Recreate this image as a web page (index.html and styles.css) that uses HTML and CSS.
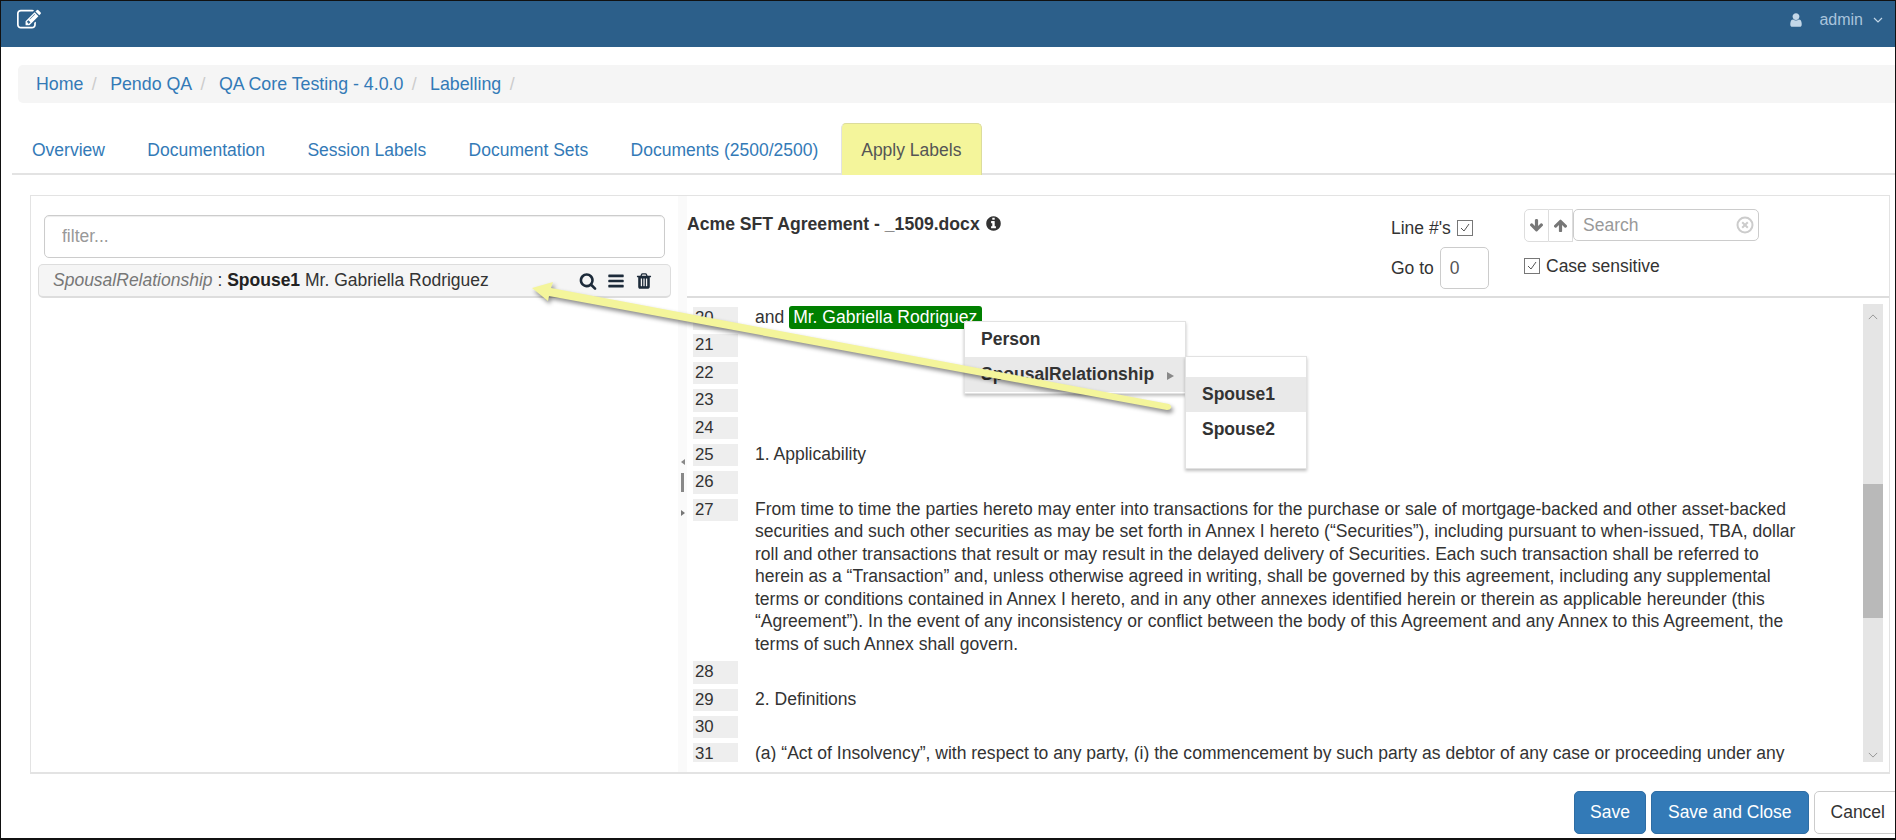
FILE: index.html
```html
<!DOCTYPE html>
<html lang="en">
<head>
    <meta charset="UTF-8">
    <title>Apply Labels</title>
    <link rel="stylesheet" href="styles.css">
</head>
<body>
<div class="page">
  <div class="topbar">
    <svg class="edit-icon" viewBox="0 0 1792 1792"><path d="M888 1184l116-116-152-152-116 116v56h96v96h56zm440-720q-16-16-33 1l-350 350q-17 17-1 33t33-1l350-350q17-17 1-33zm80 594v190q0 119-84.5 203.5t-203.5 84.5h-832q-119 0-203.5-84.5t-84.5-203.5v-832q0-119 84.5-203.5t203.5-84.5h832q63 0 117 25 15 7 18 23 3 17-9 29l-49 49q-14 14-32 8-23-6-45-6h-832q-66 0-113 47t-47 113v832q0 66 47 113t113 47h832q66 0 113-47t47-113v-126q0-13 9-22l64-64q15-15 35-7t20 29zm-96-738l288 288-672 672h-288v-288zm444 132l-92 92-288-288 92-92q28-28 68-28t68 28l152 152q28 28 28 68t-28 68z"/></svg>
    <div class="user">
      <svg class="user-icon" viewBox="0 0 1792 1792"><path d="M1536 1399q0 109-62.5 187t-150.5 78h-854q-88 0-150.5-78t-62.5-187q0-85 8.5-160.5t31.5-152 58.5-131 94-89 134.5-34.5q131 128 313 128t313-128q76 0 134.5 34.5t94 89 58.5 131 31.5 152 8.5 160.5zm-256-887q0 159-112.5 271.5t-271.5 112.5-271.5-112.5-112.5-271.5 112.5-271.5 271.5-112.5 271.5 112.5 112.5 271.5z"/></svg>
      <span class="user-name">admin</span>
      <svg class="user-caret" viewBox="0 0 10 6"><path d="M1 1l4 4 4-4"/></svg>
    </div>
  </div>

  <div class="breadcrumb">
    <a href="#">Home</a><span class="sep">/</span>
    <a href="#">Pendo QA</a><span class="sep">/</span>
    <a href="#">QA Core Testing - 4.0.0</a><span class="sep">/</span>
    <a href="#">Labelling</a><span class="sep">/</span>
  </div>

  <div class="tabs">
    <a href="#">Overview</a>
    <a href="#">Documentation</a>
    <a href="#">Session Labels</a>
    <a href="#">Document Sets</a>
    <a href="#">Documents (2500/2500)</a>
    <a href="#" class="active">Apply Labels</a>
  </div>

  <div class="panel">
    <div class="left-pane">
      <input class="filter" type="text" placeholder="filter...">
      <div class="label-row">
        <span class="label-text"><i>SpousalRelationship</i> : <b>Spouse1</b> Mr. Gabriella Rodriguez</span>
        <span class="label-icons">
          <svg viewBox="0 0 1792 1792"><path d="M1216 832q0-185-131.5-316.5t-316.5-131.5-316.5 131.5-131.5 316.5 131.5 316.5 316.5 131.5 316.5-131.5 131.5-316.5zm512 832q0 52-38 90t-90 38q-54 0-90-38l-343-342q-179 124-399 124-143 0-273.5-55.5t-225-150-150-225-55.5-273.5 55.5-273.5 150-225 225-150 273.5-55.5 273.5 55.5 225 150 150 225 55.5 273.5q0 220-124 399l343 343q37 37 37 90z"/></svg>
          <svg viewBox="0 0 1792 1792"><path d="M1664 1344v128q0 26-19 45t-45 19h-1408q-26 0-45-19t-19-45v-128q0-26 19-45t45-19h1408q26 0 45 19t19 45zm0-512v128q0 26-19 45t-45 19h-1408q-26 0-45-19t-19-45v-128q0-26 19-45t45-19h1408q26 0 45 19t19 45zm0-512v128q0 26-19 45t-45 19h-1408q-26 0-45-19t-19-45v-128q0-26 19-45t45-19h1408q26 0 45 19t19 45z"/></svg>
          <svg viewBox="0 0 1792 1792"><path d="M704 1376v-704q0-14-9-23t-23-9h-64q-14 0-23 9t-9 23v704q0 14 9 23t23 9h64q14 0 23-9t9-23zm256 0v-704q0-14-9-23t-23-9h-64q-14 0-23 9t-9 23v704q0 14 9 23t23 9h64q14 0 23-9t9-23zm256 0v-704q0-14-9-23t-23-9h-64q-14 0-23 9t-9 23v704q0 14 9 23t23 9h64q14 0 23-9t9-23zm-544-992h448l-48-117q-7-9-17-11h-317q-10 2-17 11zm928 32v64q0 14-9 23t-23 9h-96v948q0 83-47 143.5t-113 60.5h-832q-66 0-113-58.5t-47-141.5v-952h-96q-14 0-23-9t-9-23v-64q0-14 9-23t23-9h309l70-167q15-37 54-63t79-26h320q40 0 79 26t54 63l70 167h309q14 0 23 9t9 23z"/></svg>
        </span>
      </div>
    </div>

    <div class="splitter">
      <span class="split-left"></span>
      <span class="split-bar"></span>
      <span class="split-right"></span>
    </div>

    <div class="right-pane">
      <div class="doc-header">
        <div class="doc-title">Acme SFT Agreement - _1509.docx
          <svg class="info-icon" viewBox="0 0 1792 1792"><path d="M1152 1376v-160q0-14-9-23t-23-9h-96v-512q0-14-9-23t-23-9h-320q-14 0-23 9t-9 23v160q0 14 9 23t23 9h96v320h-96q-14 0-23 9t-9 23v160q0 14 9 23t23 9h448q14 0 23-9t9-23zm-128-896v-160q0-14-9-23t-23-9h-192q-14 0-23 9t-9 23v160q0 14 9 23t23 9h192q14 0 23-9t9-23zm640 416q0 209-103 385.5t-279.5 279.5-385.5 103-385.5-103-279.5-279.5-103-385.5 103-385.5 279.5-279.5 385.5-103 385.5 103 279.5 279.5 103 385.5z"/></svg>
        </div>
        <div class="line-tools">
          <div class="tool-row">Line #'s <span class="check"><svg viewBox="0 0 14 14"><path d="M3 7l3 3 5-7"/></svg></span></div>
          <div class="tool-row goto">Go to <input class="goto-input" type="text" value="0"></div>
        </div>
        <div class="search-tools">
          <div class="search-row">
            <span class="arrow-btn first"><svg viewBox="0 0 1792 1792"><path d="M1675 832q0 53-37 90l-651 651q-39 37-91 37-53 0-90-37l-651-651q-38-36-38-90 0-53 38-91l74-75q39-37 91-37 53 0 90 37l294 294v-704q0-52 38-90t90-38h128q52 0 90 38t38 90v704l294-294q37-37 90-37 52 0 91 37l75 75q37 39 37 91z"/></svg></span>
            <span class="arrow-btn"><svg viewBox="0 0 1792 1792"><path d="M1675 971q0 51-37 90l-75 75q-38 38-91 38-54 0-90-38l-294-293v704q0 52-37.5 84.5t-90.5 32.5h-128q-53 0-90.5-32.5t-37.5-84.5v-704l-294 293q-36 38-90 38t-90-38l-75-75q-38-38-38-90 0-53 38-91l651-651q35-37 90-37 54 0 91 37l651 651q37 39 37 91z"/></svg></span>
            <div class="search-box">
              <input type="text" placeholder="Search">
              <svg class="clear-icon" viewBox="0 0 18 18"><circle cx="9" cy="9" r="7.5"/><path d="M6.2 6.2l5.6 5.6M11.8 6.2l-5.6 5.6"/></svg>
            </div>
          </div>
          <div class="tool-row case"><span class="check"><svg viewBox="0 0 14 14"><path d="M3 7l3 3 5-7"/></svg></span>Case sensitive</div>
        </div>
      </div>

      <div class="doc-body">
        <div class="doc-lines">
          <div class="line"><span class="num">20</span><p>and <span class="tag">Mr. Gabriella Rodriguez</span></p></div>
          <div class="line"><span class="num">21</span><p></p></div>
          <div class="line"><span class="num">22</span><p></p></div>
          <div class="line"><span class="num">23</span><p></p></div>
          <div class="line"><span class="num">24</span><p></p></div>
          <div class="line"><span class="num">25</span><p>1. Applicability</p></div>
          <div class="line"><span class="num">26</span><p></p></div>
          <div class="line"><span class="num">27</span><p>From time to time the parties hereto may enter into transactions for the purchase or sale of mortgage-backed and other asset-backed securities and such other securities as may be set forth in Annex I hereto (“Securities”), including pursuant to when-issued, TBA, dollar roll and other transactions that result or may result in the delayed delivery of Securities. Each such transaction shall be referred to herein as a “Transaction” and, unless otherwise agreed in writing, shall be governed by this agreement, including any supplemental terms or conditions contained in Annex I hereto, and in any other annexes identified herein or therein as applicable hereunder (this “Agreement”). In the event of any inconsistency or conflict between the body of this Agreement and any Annex to this Agreement, the terms of such Annex shall govern.</p></div>
          <div class="line"><span class="num">28</span><p></p></div>
          <div class="line"><span class="num">29</span><p>2. Definitions</p></div>
          <div class="line"><span class="num">30</span><p></p></div>
          <div class="line"><span class="num">31</span><p>(a) “Act of Insolvency”, with respect to any party, (i) the commencement by such party as debtor of any case or proceeding under any</p></div>
        </div>
        <div class="scrollbar">
          <span class="scroll-btn"><svg viewBox="0 0 12 7"><path d="M1 6l5-5 5 5"/></svg></span>
          <span class="scroll-thumb"></span>
          <span class="scroll-btn"><svg viewBox="0 0 12 7"><path d="M1 1l5 5 5-5"/></svg></span>
        </div>
      </div>
    </div>
  </div>

  <div class="footer">
    <button class="btn primary">Save</button>
    <button class="btn primary">Save and Close</button>
    <button class="btn cancel">Cancel</button>
  </div>

  <!-- context menu -->
  <div class="menu menu-main">
    <div class="menu-item">Person</div>
    <div class="menu-item hover">SpousalRelationship <span class="menu-arrow"></span></div>
  </div>
  <div class="menu menu-sub">
    <div class="menu-item hover">Spouse1</div>
    <div class="menu-item">Spouse2</div>
  </div>

  <!-- callout arrow drawn over the screenshot -->
  <svg class="callout" viewBox="0 0 1896 840" width="1896" height="840">
    <path d="M532 288L553 282L551 288L1169 404Q1172 406 1171 408Q1170 410 1167 410L549 296L548 301Z"/>
  </svg>
</div>
</body>
</html>
```

FILE: styles.css
```css
* {
    box-sizing: border-box;
}

body {
    margin: 0;
    font-family: "Liberation Sans", Arial, sans-serif;
    font-size: 17.5px;
    color: #333;
}

a {
    color: #337ab7;
    text-decoration: none;
}

.page {
    position: relative;
    width: 1896px;
    height: 840px;
    overflow: hidden;
    background: #fff;
    border: 1px solid #111;
    border-bottom-width: 2px;
    display: flex;
    flex-direction: column;
}

/* Top bar */
.topbar {
    height: 46px;
    flex: none;
    background: #2c5f8a;
    display: flex;
    justify-content: space-between;
    padding: 7px 12px 0 16px;
}

.edit-icon {
    width: 24px;
    height: 24px;
    fill: #fff;
}

.user {
    display: flex;
    align-items: center;
    height: 24px;
    color: #a9c4dc;
    font-size: 16px;
}

.user-icon {
    width: 16px;
    height: 16px;
    fill: #c3d7e8;
    margin-right: 15px;
}

.user-caret {
    width: 10px;
    height: 6px;
    margin-left: 10px;
    fill: none;
    stroke: #c3d7e8;
    stroke-width: 1.2;
}

/* Breadcrumb */
.breadcrumb {
    flex: none;
    height: 38px;
    margin: 18px 0 0 17px;
    padding-left: 18px;
    line-height: 38px;
    font-size: 17.8px;
    background: #f5f5f5;
    border-radius: 5px 0 0 5px;
}

.sep {
    color: #ccc;
    margin: 0 8.4px;
}

/* Tabs */
.tabs {
    flex: none;
    height: 52px;
    margin: 20px 0 0 11px;
    display: flex;
    font-size: 17.5px;
    border-bottom: 2px solid #e3e3e3;
}

.tabs a {
    height: 52px;
    padding: 0 20px;
    margin-right: 2.4px;
    line-height: 54px;
}

.tabs a.active {
    padding: 0 19.5px;
    color: #555;
    background: #f4f59b;
    line-height: 52px;
    border: 1px solid #dcdc9c;
    border-left-color: #e2e2e2;
    border-bottom: 0;
    border-radius: 5px 5px 0 0;
}

/* Main panel */
.panel {
    flex: none;
    height: 579px;
    margin: 20px 5px 0 29px;
    display: flex;
    border: 1px solid #e3e3e3;
    border-bottom-width: 2px;
}

.left-pane {
    width: 647px;
    flex: none;
    padding-top: 19px;
}

.filter {
    display: block;
    width: 621px;
    height: 43px;
    margin-left: 13px;
    padding: 0 17px;
    border: 1px solid #ccc;
    border-radius: 5px;
    font: inherit;
    color: #555;
    box-shadow: inset 0 1px 1px rgba(0, 0, 0, .075);
}

.filter::placeholder,
.search-box input::placeholder {
    color: #999;
}

.label-row {
    width: 633px;
    height: 34px;
    margin: 6px 0 0 7px;
    padding: 0 16px 0 14px;
    display: flex;
    align-items: center;
    justify-content: space-between;
    background: #f5f5f5;
    border: 1px solid #ddd;
    border-bottom-width: 2px;
    border-radius: 5px;
}

.label-text i {
    color: #777;
}

.label-text b {
    color: #222;
}

.label-icons {
    display: flex;
    gap: 10px;
    margin-right: 1px;
}

.label-icons svg {
    width: 18px;
    height: 18px;
    fill: #1d2b3a;
}

.splitter {
    width: 9px;
    flex: none;
    background: #fafafa;
    position: relative;
    display: flex;
    flex-direction: column;
    align-items: center;
    padding-top: 263px;
}

.split-left {
    width: 0;
    height: 0;
    border: 3px solid transparent;
    border-right: 4px solid #888;
    border-left: 0;
}

.split-bar {
    width: 3px;
    height: 19px;
    margin-top: 8px;
    background: #888;
}

.split-right {
    width: 0;
    height: 0;
    margin-top: 18px;
    border: 3px solid transparent;
    border-left: 4px solid #777;
    border-right: 0;
}

.right-pane {
    flex: 1;
    min-width: 0;
    display: flex;
    flex-direction: column;
}

.doc-header {
    height: 102px;
    flex: none;
    display: flex;
    border-bottom: 2px solid #ddd;
}

.doc-title {
    flex: 1;
    padding-top: 18px;
    font-size: 17.6px;
    font-weight: bold;
}

.info-icon {
    width: 17px;
    height: 17px;
    vertical-align: -2px;
    fill: #333;
}

.line-tools {
    width: 133px;
    flex: none;
    padding-top: 22px;
}

.tool-row {
    display: flex;
    align-items: center;
    gap: 1px;
    height: 20px;
    white-space: pre;
}

.tool-row.goto {
    height: 42px;
    margin-top: 9px;
}

.check {
    width: 16px;
    height: 16px;
    flex: none;
    border: 1px solid #777;
    background: #fff;
}

.check svg {
    display: block;
    fill: none;
    stroke: #555;
    stroke-width: 1;
}

.goto-input {
    width: 49px;
    height: 42px;
    padding: 0 9px;
    border: 1px solid #ccc;
    border-radius: 5px;
    font: inherit;
    color: #555;
}

.search-tools {
    width: 365px;
    flex: none;
    padding-top: 13px;
}

.search-row {
    display: flex;
    height: 33px;
    margin-bottom: 14px;
}

.arrow-btn {
    width: 24px;
    height: 33px;
    display: flex;
    align-items: center;
    justify-content: center;
    border: 1px solid #ddd;
    border-left-width: 0;
}

.arrow-btn.first {
    width: 25px;
    border-left-width: 1px;
    border-radius: 5px 0 0 5px;
}

.arrow-btn svg {
    width: 15px;
    height: 15px;
    fill: #777;
}

.search-box {
    position: relative;
    width: 186px;
    height: 32px;
}

.search-box input {
    width: 100%;
    height: 100%;
    padding: 0 32px 0 9px;
    border: 1px solid #ccc;
    border-radius: 5px;
    font: inherit;
    color: #555;
}

.clear-icon {
    position: absolute;
    top: 7px;
    right: 5px;
    width: 18px;
    height: 18px;
    fill: none;
    stroke: #ccc;
    stroke-width: 2;
}

.tool-row.case {
    gap: 6px;
}

.doc-body {
    flex: 1;
    min-height: 0;
    display: flex;
    padding: 6px 6px 10px 0;
}

.doc-lines {
    flex: 1;
    min-width: 0;
    overflow: hidden;
    padding-top: 3px;
}

.line {
    display: flex;
    margin-bottom: 4.9px;
    line-height: 22.5px;
}

.num {
    width: 45px;
    height: 22.5px;
    flex: none;
    margin: 0 17px 0 6px;
    padding-left: 2px;
    font-size: 16.8px;
    line-height: 21.5px;
    background: #eee;
}

.line p {
    width: 1045px;
    min-height: 22.5px;
    margin: -1px 0 1px;
    font-size: 17.55px;
}

.tag {
    display: inline-block;
    padding: 0 5px 0 4px;
    color: #fff;
    background: #008000;
    border-radius: 3px;
}

.scrollbar {
    width: 20px;
    flex: none;
    background: #e5e5e5;
    position: relative;
}

.scroll-btn {
    display: block;
    height: 20px;
    text-align: center;
}

.scroll-btn:last-child {
    position: absolute;
    left: 0;
    bottom: 0;
    width: 20px;
}

.scroll-btn svg {
    width: 10px;
    height: 6px;
    margin-top: 7px;
    fill: none;
    stroke: #888;
    stroke-width: 1;
}

.scroll-thumb {
    display: block;
    height: 134px;
    margin-top: 160px;
    background: #b9b9b9;
}

/* Footer buttons */
.footer {
    flex: none;
    display: flex;
    justify-content: flex-end;
    gap: 5px;
    margin-top: 17px;
}

.btn {
    height: 43px;
    padding: 0 16px;
    font: inherit;
    border: 1px solid transparent;
    border-radius: 5px;
}

.btn.primary {
    color: #fff;
    background: #337ab7;
    border-color: #2e6da4;
}

.btn.primary:first-child {
    padding: 0 15px;
}

.btn.cancel {
    color: #333;
    background: #fff;
    border-color: #ccc;
    margin-right: -7px;
}

/* Context menus */
.menu {
    position: absolute;
    background: #fff;
    border: 1px solid #e2e2e2;
    box-shadow: 0 2px 3px rgba(0, 0, 0, .25);
    font-weight: bold;
}

.menu-main {
    left: 963px;
    top: 320px;
    width: 222px;
    height: 73px;
}

.menu-sub {
    left: 1184px;
    top: 355px;
    width: 122px;
    height: 113px;
    padding-top: 20px;
}

.menu-item {
    height: 35px;
    line-height: 35px;
    padding-left: 16px;
    white-space: nowrap;
}

.menu-item.hover {
    background: #e9e9e9;
}

.menu-arrow {
    display: inline-block;
    width: 0;
    height: 0;
    margin-left: 8px;
    border: 4px solid transparent;
    border-left: 7px solid #888;
    border-right: 0;
}

.callout {
    position: absolute;
    left: -1px;
    top: -1px;
    pointer-events: none;
    fill: #f4f59b;
    filter: drop-shadow(2px 3px 2px rgba(0, 0, 0, .45));
}
```
